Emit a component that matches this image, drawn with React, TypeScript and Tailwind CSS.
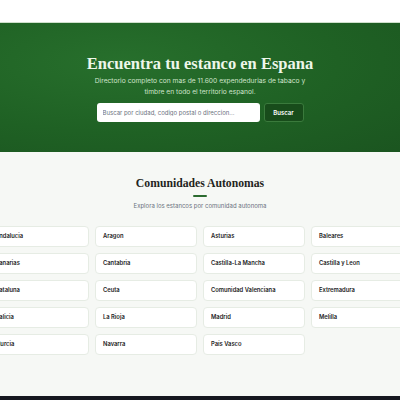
const comunidades = [
  "Andalucia",
  "Aragon",
  "Asturias",
  "Baleares",
  "Canarias",
  "Cantabria",
  "Castilla-La Mancha",
  "Castilla y Leon",
  "Cataluna",
  "Ceuta",
  "Comunidad Valenciana",
  "Extremadura",
  "Galicia",
  "La Rioja",
  "Madrid",
  "Melilla",
  "Murcia",
  "Navarra",
  "País Vasco",
];

export default function App() {
  return (
    <div className="flex h-[400px] w-[400px] flex-col overflow-hidden bg-white font-['Inter',sans-serif]">
      <div className="h-[23px] shrink-0 border-b border-[#cfe0cc] bg-white" />

      <section className="flex h-[129px] shrink-0 flex-col items-center bg-[radial-gradient(ellipse_at_30%_30%,#276f2c_0%,#1f6124_55%,#1b5520_100%)] pt-[31px]">
        <h1 className="font-['Liberation_Serif',serif] text-[16.5px] font-bold leading-[20px] text-[#eef7ea]">
          Encuentra tu estanco en Espana
        </h1>
        <p className="mt-[2px] w-[215px] text-center text-[6.7px] leading-[11px] text-[#cfe4cb]">
          Directorio completo con mas de 11.600 expendedurias de tabaco y timbre en todo el territorio espanol.
        </p>
        <form className="mt-[5px] flex gap-[4px]" onSubmit={(event) => event.preventDefault()}>
          <input
            className="h-[19px] w-[163px] rounded-[3px] bg-white px-[6px] text-[6px] text-gray-700 outline-none placeholder:text-[#6b7280]"
            placeholder="Buscar por ciudad, codigo postal o direccion..."
          />
          <button
            className="h-[19px] w-[40px] rounded-[3px] border border-[#3a7a3c] bg-[#184c1b] text-[6px] font-semibold text-white"
            type="submit"
          >
            Buscar
          </button>
        </form>
      </section>

      <section className="flex flex-1 flex-col items-center bg-[#f6f8f5] pt-[25px]">
        <h2 className="font-['Liberation_Serif',serif] text-[11.7px] font-bold leading-[14px] text-[#1f2421]">
          Comunidades Autonomas
        </h2>
        <div className="mt-[4px] h-[2px] w-[14px] rounded bg-[#2c6b30]" />
        <p className="mt-[4px] text-[6px] leading-[9px] text-[#6b7280]">Explora los estancos por comunidad autonoma</p>

        <div className="mt-[16px] flex w-full justify-center">
          <div className="grid w-[426px] shrink-0 grid-cols-4 gap-x-[6px] gap-y-[6.5px]">
            {comunidades.map((nombre) => (
              <div
                key={nombre}
                className="flex h-[20.5px] items-center rounded-[4px] border border-[#e6ece4] bg-white px-[7px] text-[5.8px] font-semibold text-[#222]"
              >
                {nombre}
              </div>
            ))}
          </div>
        </div>
      </section>

      <div className="h-[4px] shrink-0 bg-[#16171f]" />
    </div>
  );
}
